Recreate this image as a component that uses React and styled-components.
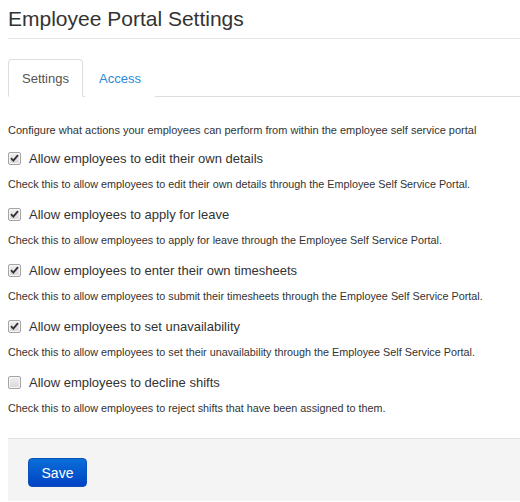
import React, { useState } from "react";
import styled, { createGlobalStyle } from "styled-components";

const GlobalStyle = createGlobalStyle`
  html, body {
    margin: 0;
    padding: 0;
    background: #fff;
  }
  body {
    font-family: "Liberation Sans", Arial, sans-serif;
    color: #333;
  }
`;

const options = [
  {
    id: "edit",
    label: "Allow employees to edit their own details",
    help: "Check this to allow employees to edit their own details through the Employee Self Service Portal.",
    checked: true,
  },
  {
    id: "leave",
    label: "Allow employees to apply for leave",
    help: "Check this to allow employees to apply for leave through the Employee Self Service Portal.",
    checked: true,
  },
  {
    id: "timesheets",
    label: "Allow employees to enter their own timesheets",
    help: "Check this to allow employees to submit their timesheets through the Employee Self Service Portal.",
    checked: true,
  },
  {
    id: "unavailability",
    label: "Allow employees to set unavailability",
    help: "Check this to allow employees to set their unavailability through the Employee Self Service Portal.",
    checked: true,
  },
  {
    id: "decline",
    label: "Allow employees to decline shifts",
    help: "Check this to allow employees to reject shifts that have been assigned to them.",
    checked: false,
  },
];

const App = () => {
  const [tab, setTab] = useState("settings");
  const [values, setValues] = useState(
    Object.fromEntries(options.map((o) => [o.id, o.checked]))
  );

  const toggle = (id) => setValues((prev) => ({ ...prev, [id]: !prev[id] }));

  return (
    <>
      <GlobalStyle />
      <Page>
        <Title>Employee Portal Settings</Title>

        <Tabs>
          <Tab active={tab === "settings"} onClick={() => setTab("settings")}>
            Settings
          </Tab>
          <Tab active={tab === "access"} onClick={() => setTab("access")}>
            Access
          </Tab>
        </Tabs>

        <Pane>
          <Intro>
            Configure what actions your employees can perform from within the
            employee self service portal
          </Intro>

          {options.map((o) => (
            <Option key={o.id}>
              <Label>
                <Box checked={values[o.id]} onClick={() => toggle(o.id)}>
                  {values[o.id] && (
                    <svg width="9" height="8" viewBox="0 0 9 8">
                      <path
                        d="M1 4.2 L3.3 6.6 L8 1.2"
                        fill="none"
                        stroke="#333"
                        strokeWidth="1.9"
                      />
                    </svg>
                  )}
                </Box>
                {o.label}
              </Label>
              <Help>{o.help}</Help>
            </Option>
          ))}
        </Pane>

        <Footer>
          <SaveButton>Save</SaveButton>
        </Footer>
      </Page>
    </>
  );
};

export default App;

const Page = styled.div`
  padding: 8px 0 0 8px;
`;

const Title = styled.h1`
  margin: 0;
  padding: 0 0 8px;
  font-size: 21px;
  font-weight: normal;
  line-height: 22px;
  color: #333;
  border-bottom: 1px solid #e5e5e5;
`;

const Tabs = styled.div`
  display: flex;
  margin-top: 20px;
  border-bottom: 1px solid #ddd;
`;

const Tab = styled.button`
  margin-bottom: -1px;
  padding: 0 13px;
  height: 38px;
  font-family: inherit;
  font-size: 13px;
  color: ${(p) => (p.active ? "#555" : "#2a8ad4")};
  background: #fff;
  border: 1px solid ${(p) => (p.active ? "#ddd" : "transparent")};
  border-bottom-color: ${(p) => (p.active ? "#fff" : "transparent")};
  border-radius: 4px 4px 0 0;
  cursor: pointer;
  margin-right: 2px;
`;

const Pane = styled.div`
  padding-top: 25px;
  padding-bottom: 10px;
`;

const Intro = styled.p`
  margin: 0 0 10px;
  font-size: 11px;
  line-height: 16px;
`;

const Option = styled.div`
  margin-bottom: 12px;
`;

const Label = styled.label`
  display: flex;
  align-items: center;
  gap: 8px;
  height: 20px;
  font-size: 13px;
  color: #333;
`;

const Box = styled.span`
  display: inline-flex;
  align-items: center;
  justify-content: center;
  width: 11px;
  height: 11px;
  border: 1px solid #a4a4a4;
  border-radius: 2px;
  background: linear-gradient(#f0f0f0, #d8d8d8);
  box-shadow: inset 0 0 0 1px #f6f6f6;
  cursor: pointer;
`;

const Help = styled.p`
  margin: 8px 0 0;
  font-size: 10.8px;
  line-height: 16px;
  color: #333;
`;

const Footer = styled.div`
  padding: 19px 20px 14px;
  background: #f4f4f4;
  border-top: 1px solid #e2e2e2;
`;

const SaveButton = styled.button`
  width: 59px;
  height: 29px;
  font-family: inherit;
  font-size: 14px;
  color: #fff;
  background: linear-gradient(#0a6fd8, #0042c4);
  border: 1px solid #0a52b8;
  border-radius: 4px;
  cursor: pointer;
`;
